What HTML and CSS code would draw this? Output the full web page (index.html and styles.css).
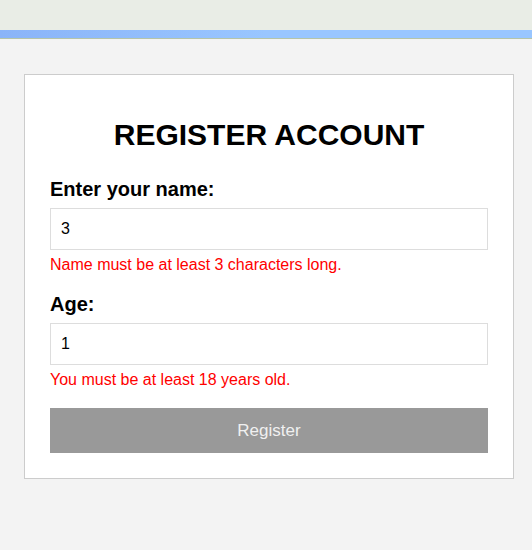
FILE: index.html
```html
<!DOCTYPE html>
<html>
<head>
<meta charset="utf-8">
<link rel="stylesheet" href="styles.css">
</head>
<body>
<div class="topbar"></div>
<div class="accent"></div>
<main class="page">
  <form class="card">
    <h1 class="title">REGISTER ACCOUNT</h1>
    <div class="field">
      <label class="label">Enter your name:</label>
      <input class="input" type="text" value="3">
      <div class="error">Name must be at least 3 characters long.</div>
    </div>
    <div class="field">
      <label class="label">Age:</label>
      <input class="input" type="text" value="1">
      <div class="error">You must be at least 18 years old.</div>
    </div>
    <button class="btn" type="button">Register</button>
  </form>
</main>
</body>
</html>
```
FILE: styles.css
```css
* { box-sizing: border-box; }
html, body { margin: 0; padding: 0; }
body {
  background: #f3f3f3;
  font-family: "Liberation Sans", Arial, sans-serif;
  color: #000;
  height: 550px;
  overflow: hidden;
}
.topbar {
  height: 30px;
  background: #e9ede6;
}
.accent {
  height: 9px;
  background: linear-gradient(90deg, #8ab4f8 0%, #99c6ff 50%, #99c6ff 100%);
  border-bottom: 1px solid #b5c4a8;
}
.page {
  padding: 35px 18px 0 24px;
}
.card {
  width: 490px;
  background: #fff;
  border: 1px solid #cccccc;
  padding: 25px;
  display: flex;
  flex-direction: column;
}
.title {
  margin: 17px 0 25px;
  text-align: center;
  font-size: 30px;
  font-weight: bold;
  line-height: 36px;
}
.field {
  display: flex;
  flex-direction: column;
  margin-bottom: 19px;
}
.label {
  font-size: 20px;
  font-weight: bold;
  line-height: 23px;
  margin-bottom: 7px;
}
.input {
  height: 42px;
  border: 1px solid #dddddd;
  padding: 0 10px;
  font-family: "Liberation Sans", Arial, sans-serif;
  font-size: 16px;
  color: #000;
  background: #fff;
  outline: none;
}
.error {
  color: #ff0000;
  font-size: 16px;
  line-height: 18px;
  margin-top: 6px;
}
.btn {
  height: 45px;
  border: none;
  background: #999999;
  color: #f0f0f0;
  font-family: "Liberation Sans", Arial, sans-serif;
  font-size: 17px;
}
```
